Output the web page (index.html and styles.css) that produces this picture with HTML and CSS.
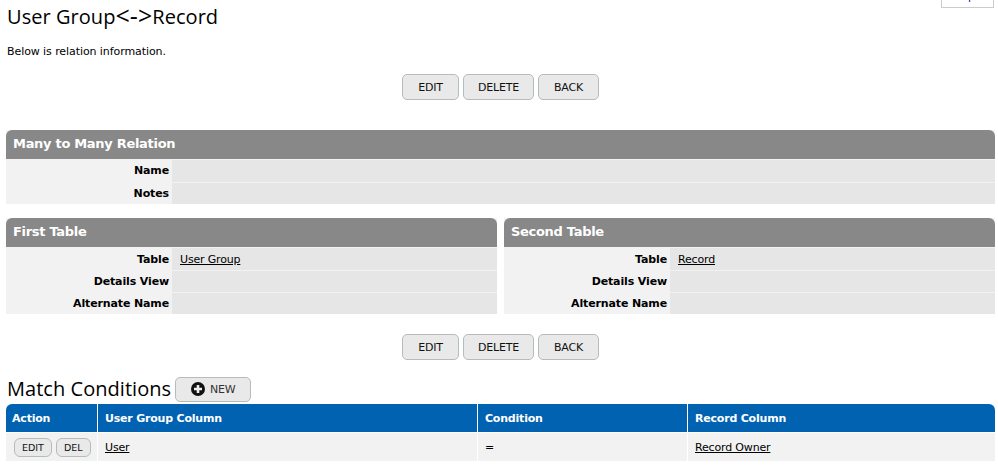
FILE: index.html
```html
<!DOCTYPE html>
<html lang="en">
<head>
<meta charset="utf-8">
<title>User Group&lt;-&gt;Record</title>
<link rel="stylesheet" href="styles.css">
</head>
<body>
<a class="help-tab" href="#">Help</a>
<h1 class="page-title">User Group<span class="arrow">&lt;-&gt;</span>Record</h1>
<p class="intro">Below is relation information.</p>
<div class="actions actions-top">
  <a class="btn btn-edit" href="#">EDIT</a><a class="btn btn-delete" href="#">DELETE</a><a class="btn btn-back" href="#">BACK</a>
</div>
<section class="panel">
  <h2 class="panel-title">Many to Many Relation</h2>
  <div class="row"><div class="label">Name</div><div class="value"></div></div>
  <div class="row"><div class="label">Notes</div><div class="value"></div></div>
</section>
<div class="split">
  <section class="panel">
    <h2 class="panel-title">First Table</h2>
    <div class="row row-link"><div class="label">Table</div><div class="value"><a href="#">User Group</a></div></div>
    <div class="row"><div class="label">Details View</div><div class="value"></div></div>
    <div class="row"><div class="label">Alternate Name</div><div class="value"></div></div>
  </section>
  <section class="panel">
    <h2 class="panel-title">Second Table</h2>
    <div class="row row-link"><div class="label">Table</div><div class="value"><a href="#">Record</a></div></div>
    <div class="row"><div class="label">Details View</div><div class="value"></div></div>
    <div class="row"><div class="label">Alternate Name</div><div class="value"></div></div>
  </section>
</div>
<div class="actions actions-bottom">
  <a class="btn btn-edit" href="#">EDIT</a><a class="btn btn-delete" href="#">DELETE</a><a class="btn btn-back" href="#">BACK</a>
</div>
<div class="conditions-head">
  <h2 class="conditions-title">Match Conditions</h2>
  <a class="btn btn-new" href="#"><svg class="plus" viewBox="0 0 14 14" width="14" height="14" aria-hidden="true"><circle cx="7" cy="7" r="7" fill="#111"/><path d="M7 3v8M3 7h8" stroke="#eee" stroke-width="2.6"/></svg>NEW</a>
</div>
<div class="grid">
  <div class="cell head c-action">Action</div>
  <div class="cell head">User Group Column</div>
  <div class="cell head">Condition</div>
  <div class="cell head c-last">Record Column</div>
  <div class="cell body c-action"><a class="btn-mini" href="#">EDIT</a><a class="btn-mini" href="#">DEL</a></div>
  <div class="cell body"><a href="#">User</a></div>
  <div class="cell body">=</div>
  <div class="cell body"><a href="#">Record Owner</a></div>
</div>
</body>
</html>
```
FILE: styles.css
```css
* { box-sizing: border-box; }
html, body { margin: 0; padding: 0; background: #fff; height: 467px; overflow: hidden; }
body { padding: 0 3px 0 6px; font-family: "DejaVu Sans", Verdana, sans-serif; font-size: 11px; color: #000; position: relative; }
a { color: #000; }
.help-tab { position: absolute; top: -14px; left: 941px; width: 53px; height: 22px; border: 1px solid #ccc; padding: 2px 0 0 8px; color: #40a; text-decoration: none; font-size: 11px; background: #fff; line-height: 16px; }
.page-title { margin: 0; padding: 0 0 0 1px; height: 43px; font-family: "Open Sans", sans-serif; font-size: 20px; line-height: 30px; font-weight: 400; letter-spacing: 0.05px; }
.arrow { font-size: 25px; line-height: 30px; vertical-align: -1px; }
.intro { margin: 0; padding: 1px 0 0 1px; height: 31px; line-height: 16px; letter-spacing: -0.08px; }
.actions { display: flex; justify-content: center; gap: 4px; }
.actions-top { height: 56px; }
.actions-bottom { height: 42px; margin-top: 20px; }
.btn { display: inline-flex; align-items: center; justify-content: center; height: 26px; border: 1px solid #b5bcbc; border-radius: 5px; background: #e9e9e9; color: #111; text-decoration: none; font-size: 11px; letter-spacing: -0.2px; }
.btn-edit { width: 57px; }
.btn-delete { width: 71px; }
.btn-back { width: 61px; }
.panel { background: #f2f2f2; }
.panel-title { margin: 0; height: 29px; background: #888; color: #fff; border-radius: 6px 6px 0 0; font-size: 13px; font-weight: 700; line-height: 28px; padding-left: 7px; letter-spacing: -0.3px; }
.row { display: flex; height: 22px; padding-top: 1px; }
.panel-title + .row { height: 23px; }
.row-link .label, .row-link .value { line-height: 23px; }
.label { width: 166px; flex: none; text-align: right; padding-right: 3px; font-weight: 700; line-height: 21px; letter-spacing: -0.13px; }
.value { flex: 1; background: #e6e6e6; padding-left: 8px; line-height: 21px; letter-spacing: -0.17px; }
.split { display: grid; grid-template-columns: 491px 491px; gap: 7px; margin-top: 14px; }
.conditions-head { display: flex; align-items: center; gap: 4px; height: 26px; }
.conditions-title { margin: 0; font-family: "Open Sans", sans-serif; font-size: 20px; font-weight: 400; line-height: 26px; letter-spacing: 0.04px; padding-left: 1px; }
.btn-new { height: 25px; width: 76px; padding: 0; color: #333; gap: 5px; }
.plus { flex: none; }
.grid { display: grid; grid-template-columns: 91px 380px 210px 308px; margin-top: 2px; }
.cell { padding-left: 7px; }
.head { height: 28px; background: #0062b1; color: #fff; font-weight: 700; line-height: 29px; letter-spacing: -0.2px; border-left: 1px solid #fff; }
.head.c-action { border-left: 0; border-top-left-radius: 6px; padding-left: 6px; }
.head.c-last { border-top-right-radius: 6px; }
.body { height: 28px; margin-top: 1px; background: #f2f2f2; line-height: 29px; letter-spacing: -0.17px; border-left: 1px solid #fff; }
.body.c-action { border-left: 0; padding: 5px 0 0 8px; display: flex; gap: 4px; }
.btn-mini { display: inline-flex; align-items: center; justify-content: center; height: 19px; padding: 0 7px; border: 1px solid #b5bcbc; border-radius: 6px; background: #e9e9e9; color: #111; text-decoration: none; font-size: 9.5px; letter-spacing: 0; line-height: 15px; }
```
